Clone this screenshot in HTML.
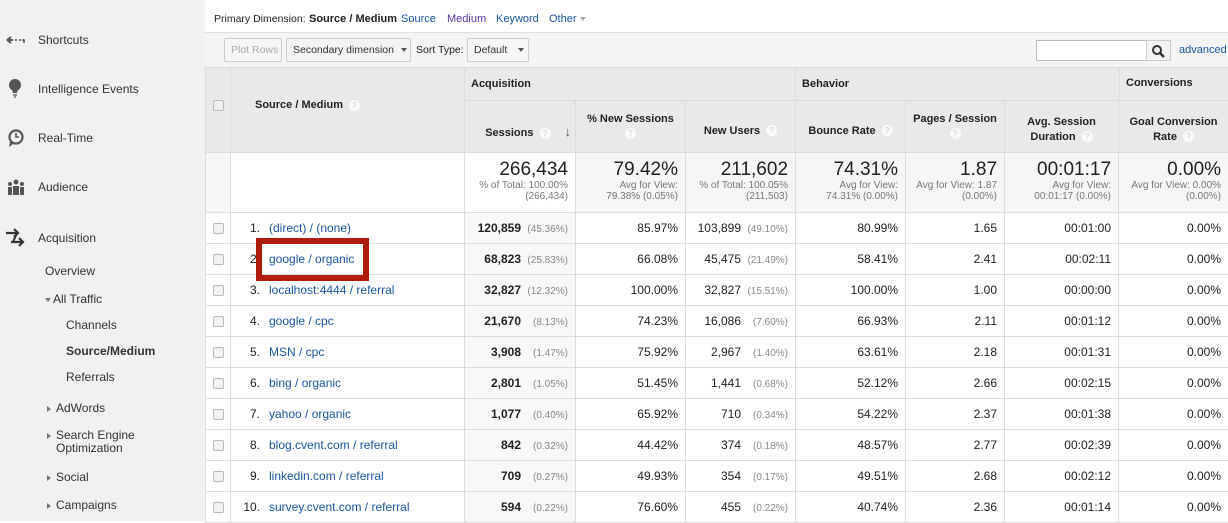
<!DOCTYPE html>
<html><head><style>
*{margin:0;padding:0;box-sizing:border-box}
body{width:1228px;height:521px;overflow:hidden;font-family:"Liberation Sans",Arial,sans-serif;font-size:12px;color:#222;background:#fff;position:relative}
#side{position:absolute;left:0;top:0;width:205px;height:521px;background:#f1f1f1}
#side div{position:absolute;white-space:nowrap;color:#333}
.ic{position:absolute;left:6px}
.a{color:#1a55a3}
.tri{display:inline-block;width:0;height:0;border-left:4px solid #777;border-top:3px solid transparent;border-bottom:3px solid transparent;margin-right:5px;vertical-align:middle}
.trd{display:inline-block;width:0;height:0;border-top:4px solid #777;border-left:3px solid transparent;border-right:3px solid transparent;margin-right:2px;vertical-align:middle}
#top{position:absolute;left:205px;top:0;width:1023px;height:33px;border-bottom:1px solid #e0e0e0;font-size:11px}
#top>span{position:absolute;top:13px;white-space:nowrap}
#tool{position:absolute;left:205px;top:33px;width:1023px;height:34px;background:#f4f4f4}
.btn{position:absolute;top:5px;height:24px;border:1px solid #ccc;border-radius:2px;background:#f6f6f6;font-size:10.5px;line-height:22px;padding-left:6px;color:#333;white-space:nowrap}
table{position:absolute;left:205px;top:67px;border-collapse:collapse;table-layout:fixed;width:1023px}
td{border:1px solid #dcdcdc;padding:0 7px;text-align:right;font-size:12px;height:31px;white-space:nowrap;overflow:hidden}
.h td{background:#e9e9e9;font-weight:bold;font-size:11px;color:#222}
.q{display:inline-block;width:11px;height:11px;border-radius:50%;background:#fafafa;color:#ccc;font-size:8px;line-height:11px;text-align:center;font-weight:normal;margin-left:6px;vertical-align:middle}
.tot td{background:#f6f6f6;vertical-align:top;padding-top:7px;height:60px}
.big{font-size:19px;color:#222;line-height:20px}
.sm{font-size:10px;color:#777;line-height:11px}
.cb{display:inline-block;width:11px;height:11px;border:1px solid #bbb;border-radius:2px;background:#f2f2f2;vertical-align:middle}
td.l{text-align:left}
td.s{background:#f8f8f8}
.g{color:#888;font-size:10px;display:inline-block;width:47px;text-align:right}
b{font-weight:bold}
.n{display:inline-block;width:22px;text-align:right;margin-right:9px}
</style></head><body>
<div id="side">
<svg class="ic" style="top:34px" width="20" height="12"><path d="M1 6h6M1 6l4-3M1 6l4 3" stroke="#555" stroke-width="2" fill="none"/><path d="M9 6h2M13 6h2M16 6h2v3" stroke="#555" stroke-width="1.5" fill="none"/></svg>
<div style="left:38px;top:33px">Shortcuts</div>
<svg class="ic" style="top:79px;left:8px" width="14" height="20"><circle cx="7" cy="6" r="6" fill="#555"/><path d="M4 10h6l-1 4H5z" fill="#555"/><path d="M5 16h4M6 18h2" stroke="#555" stroke-width="1.3"/></svg>
<div style="left:38px;top:82px">Intelligence Events</div>
<svg class="ic" style="top:129px;left:7px" width="18" height="20"><circle cx="9" cy="8" r="6.5" fill="none" stroke="#555" stroke-width="2.2"/><path d="M9 4v4h3" stroke="#555" stroke-width="1.6" fill="none"/><path d="M3 12l-1 6 4-3z" fill="#555"/></svg>
<div style="left:38px;top:131px">Real-Time</div>
<svg class="ic" style="top:179px;left:7px" width="18" height="16"><circle cx="9" cy="3" r="2.5" fill="#555"/><circle cx="3" cy="5" r="2" fill="#555"/><circle cx="15" cy="5" r="2" fill="#555"/><rect x="6" y="7" width="6" height="9" fill="#555"/><rect x="1" y="8" width="4" height="8" fill="#555"/><rect x="13" y="8" width="4" height="8" fill="#555"/></svg>
<div style="left:38px;top:180px">Audience</div>
<svg class="ic" style="top:228px;left:5px" width="20" height="20"><path d="M1 5h11M9 1l4 4-4 4" stroke="#333" stroke-width="2.2" fill="none"/><path d="M6 14h11M14 10l4 4-4 4" stroke="#333" stroke-width="2.2" fill="none"/><path d="M12 5l-4 9" stroke="#333" stroke-width="2"/></svg>
<div style="left:38px;top:231px">Acquisition</div>
<div style="left:45px;top:264px">Overview</div>
<div style="left:45px;top:292px"><span class="trd"></span>All Traffic</div>
<div style="left:66px;top:318px">Channels</div>
<div style="left:66px;top:344px;font-weight:bold">Source/Medium</div>
<div style="left:66px;top:370px">Referrals</div>
<div style="left:47px;top:401px"><span class="tri"></span>AdWords</div>
<div style="left:47px;top:429px;line-height:13px"><span class="tri"></span>Search Engine<br><span style="margin-left:9px">Optimization</span></div>
<div style="left:47px;top:470px"><span class="tri"></span>Social</div>
<div style="left:47px;top:498px"><span class="tri"></span>Campaigns</div>
</div>
<div id="top">
<span style="left:9px;font-size:10.5px">Primary Dimension:</span>
<span style="left:104px;font-weight:bold">Source / Medium</span>
<span style="left:196px" class="a">Source</span>
<span style="left:242px;color:#5a35a8">Medium</span>
<span style="left:291px" class="a">Keyword</span>
<span style="left:344px" class="a">Other <span class="trd" style="border-top-color:#aaa"></span></span>
</div>
<div id="tool">
<div class="btn" style="left:19px;width:58px;color:#aaa">Plot Rows</div>
<div class="btn" style="left:81px;width:125px;background:#f3f3f3">Secondary dimension <span class="trd" style="border-top-color:#555;margin-left:4px"></span></div>
<span style="position:absolute;left:211px;top:11px;font-size:10.5px">Sort Type:</span>
<div class="btn" style="left:262px;width:62px">Default <span class="trd" style="border-top-color:#555;margin-left:8px"></span></div>
<div style="position:absolute;left:831px;top:7px;width:111px;height:21px;border:1px solid #bbb;background:#fff"></div>
<div style="position:absolute;left:941px;top:7px;width:25px;height:21px;border:1px solid #ccc;background:#f3f3f3"><svg width="24" height="20"><circle cx="10" cy="9" r="4" stroke="#333" stroke-width="2" fill="none"/><path d="M13 12l4 4" stroke="#333" stroke-width="2.5"/></svg></div>
<span class="a" style="position:absolute;left:974px;top:11px;font-size:11px">advanced</span>
</div>
<table>
<colgroup><col style="width:25px"><col style="width:234px"><col style="width:111px"><col style="width:110px"><col style="width:110px"><col style="width:110px"><col style="width:99px"><col style="width:114px"><col style="width:110px"></colgroup>
<tr class="h"><td rowspan="2" style="text-align:center;vertical-align:middle;padding:0 0 10px"><span class="cb" style="background:#eee"></span></td><td rowspan="2" style="text-align:left;padding-left:24px;padding-bottom:10px">Source / Medium<span class="q">?</span></td><td colspan="3" style="text-align:left;padding-left:6px;height:33px">Acquisition</td><td colspan="4" style="text-align:left;padding-left:6px">Behavior</td></tr>
<tr class="h"><td style="height:52px;text-align:right;padding-right:4px;padding-top:10px">Sessions<span class="q">?</span><span style="margin-left:14px;color:#555;font-size:13px">↓</span></td><td style="text-align:center;line-height:15px">% New Sessions<br><span class="q" style="margin:0">?</span></td><td style="text-align:center;padding-top:8px">New Users<span class="q">?</span></td><td style="text-align:center;padding-top:8px">Bounce Rate<span class="q">?</span></td><td style="text-align:center;line-height:15px">Pages / Session<br><span class="q" style="margin:0">?</span></td><td style="text-align:center;line-height:15px;padding-top:6px">Avg. Session<br>Duration<span class="q">?</span></td><td style="text-align:center;line-height:15px;padding-top:6px">Goal Conversion<br>Rate<span class="q">?</span></td></tr>
<tr class="tot"><td style="background:#f6f6f6"></td><td style="background:#fff"></td>
<td style="background:#fff"><div class="big">266,434</div><div class="sm">% of Total: 100.00%<br>(266,434)</div></td>
<td><div class="big">79.42%</div><div class="sm">Avg for View:<br>79.38% (0.05%)</div></td>
<td><div class="big">211,602</div><div class="sm">% of Total: 100.05%<br>(211,503)</div></td>
<td><div class="big">74.31%</div><div class="sm">Avg for View:<br>74.31% (0.00%)</div></td>
<td><div class="big">1.87</div><div class="sm">Avg for View: 1.87<br>(0.00%)</div></td>
<td><div class="big">00:01:17</div><div class="sm">Avg for View:<br>00:01:17 (0.00%)</div></td>
<td><div class="big">0.00%</div><div class="sm">Avg for View: 0.00%<br>(0.00%)</div></td></tr>
<tr><td style="text-align:center;padding:0"><span class="cb"></span></td><td class="l"><span class="n">1.</span><span class="a">(direct) / (none)</span></td><td class="s"><b>120,859</b><span class="g">(45.36%)</span></td><td>85.97%</td><td>103,899<span class="g">(49.10%)</span></td><td>80.99%</td><td>1.65</td><td>00:01:00</td><td>0.00%</td></tr>
<tr><td style="text-align:center;padding:0"><span class="cb"></span></td><td class="l"><span class="n">2.</span><span class="a">google / organic</span></td><td class="s"><b>68,823</b><span class="g">(25.83%)</span></td><td>66.08%</td><td>45,475<span class="g">(21.49%)</span></td><td>58.41%</td><td>2.41</td><td>00:02:11</td><td>0.00%</td></tr>
<tr><td style="text-align:center;padding:0"><span class="cb"></span></td><td class="l"><span class="n">3.</span><span class="a">localhost:4444 / referral</span></td><td class="s"><b>32,827</b><span class="g">(12.32%)</span></td><td>100.00%</td><td>32,827<span class="g">(15.51%)</span></td><td>100.00%</td><td>1.00</td><td>00:00:00</td><td>0.00%</td></tr>
<tr><td style="text-align:center;padding:0"><span class="cb"></span></td><td class="l"><span class="n">4.</span><span class="a">google / cpc</span></td><td class="s"><b>21,670</b><span class="g">(8.13%)</span></td><td>74.23%</td><td>16,086<span class="g">(7.60%)</span></td><td>66.93%</td><td>2.11</td><td>00:01:12</td><td>0.00%</td></tr>
<tr><td style="text-align:center;padding:0"><span class="cb"></span></td><td class="l"><span class="n">5.</span><span class="a">MSN / cpc</span></td><td class="s"><b>3,908</b><span class="g">(1.47%)</span></td><td>75.92%</td><td>2,967<span class="g">(1.40%)</span></td><td>63.61%</td><td>2.18</td><td>00:01:31</td><td>0.00%</td></tr>
<tr><td style="text-align:center;padding:0"><span class="cb"></span></td><td class="l"><span class="n">6.</span><span class="a">bing / organic</span></td><td class="s"><b>2,801</b><span class="g">(1.05%)</span></td><td>51.45%</td><td>1,441<span class="g">(0.68%)</span></td><td>52.12%</td><td>2.66</td><td>00:02:15</td><td>0.00%</td></tr>
<tr><td style="text-align:center;padding:0"><span class="cb"></span></td><td class="l"><span class="n">7.</span><span class="a">yahoo / organic</span></td><td class="s"><b>1,077</b><span class="g">(0.40%)</span></td><td>65.92%</td><td>710<span class="g">(0.34%)</span></td><td>54.22%</td><td>2.37</td><td>00:01:38</td><td>0.00%</td></tr>
<tr><td style="text-align:center;padding:0"><span class="cb"></span></td><td class="l"><span class="n">8.</span><span class="a">blog.cvent.com / referral</span></td><td class="s"><b>842</b><span class="g">(0.32%)</span></td><td>44.42%</td><td>374<span class="g">(0.18%)</span></td><td>48.57%</td><td>2.77</td><td>00:02:39</td><td>0.00%</td></tr>
<tr><td style="text-align:center;padding:0"><span class="cb"></span></td><td class="l"><span class="n">9.</span><span class="a">linkedin.com / referral</span></td><td class="s"><b>709</b><span class="g">(0.27%)</span></td><td>49.93%</td><td>354<span class="g">(0.17%)</span></td><td>49.51%</td><td>2.68</td><td>00:02:12</td><td>0.00%</td></tr>
<tr><td style="text-align:center;padding:0"><span class="cb"></span></td><td class="l"><span class="n">10.</span><span class="a">survey.cvent.com / referral</span></td><td class="s"><b>594</b><span class="g">(0.22%)</span></td><td>76.60%</td><td>455<span class="g">(0.22%)</span></td><td>40.74%</td><td>2.36</td><td>00:01:14</td><td>0.00%</td></tr>
</table>
<div style="position:absolute;left:1119px;top:68px;width:109px;height:32px;background:#e9e9e9;border-left:1px solid #dcdcdc;font-size:11px;font-weight:bold;line-height:31px;padding-left:6px">Conversions</div>
<div style="position:absolute;left:256px;top:238px;width:113px;height:43px;border:6px solid #b01c0c"></div>
</body></html>
